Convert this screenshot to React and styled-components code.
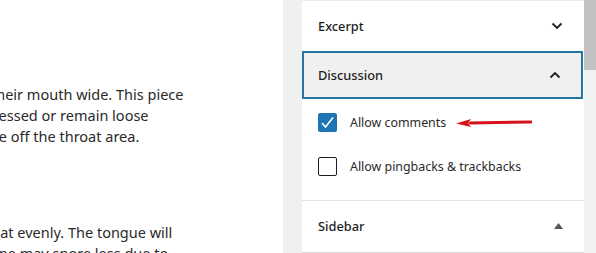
import React from "react";
import styled, { createGlobalStyle } from "styled-components";

const Global = createGlobalStyle`
  html, body { margin: 0; padding: 0; background: #fff; overflow: hidden; }
  body { font-family: "Noto Sans", "Open Sans", sans-serif; color: #1e1e1e; }
`;

const Page = styled.div`
  display: flex;
  width: 596px;
  height: 253px;
  overflow: hidden;
`;

const Content = styled.div`
  width: 283px;
  flex: none;
  background: #fff;
  overflow: hidden;
`;

const Paragraph = styled.div`
  margin-top: ${(p) => p.$top}px;
  font-size: 14.5px;
  line-height: 21px;
  color: #2a2a2a;
  white-space: nowrap;
`;

const Line = styled.div`
  margin-left: ${(p) => p.$shift}px;
`;

const Gutter = styled.div`
  width: 19px;
  flex: none;
  background: #f0f0f0;
`;

const Panel = styled.div`
  width: 282px;
  flex: none;
  height: 251px;
  background: #fff;
  border-top: 1px solid #eaeaea;
  border-bottom: 1px solid #d8d8d8;
  display: flex;
  flex-direction: column;
`;

const Header = styled.div`
  display: flex;
  align-items: center;
  justify-content: space-between;
  height: ${(p) => p.$h}px;
  font-size: 12.8px;
  font-weight: 500;
  color: #1e1e1e;
  box-sizing: border-box;
  background: ${(p) => (p.$active ? "#f0f0f0" : "#fff")};
  border: ${(p) => (p.$active ? "2px solid #2676a5" : "none")};
  margin-right: ${(p) => (p.$active ? "1px" : "0")};
  padding-left: ${(p) => (p.$active ? "14px" : "16px")};
  padding-right: ${(p) => (p.$active ? "20px" : "21px")};
`;

const Body = styled.div`
  display: flex;
  flex-direction: column;
  gap: 25px;
  padding: 14px 16px 24px 16px;
  border-bottom: 1px solid #e2e2e2;
`;

const Option = styled.label`
  display: flex;
  align-items: center;
  gap: 13px;
  font-size: 12.4px;
  color: #2a2a2a;
  height: 19px;
`;

const Box = styled.span`
  width: 19px;
  height: 19px;
  box-sizing: border-box;
  border-radius: 2px;
  flex: none;
  display: flex;
  align-items: center;
  justify-content: center;
  background: ${(p) => (p.$checked ? "#1f74b3" : "#fff")};
  border: ${(p) => (p.$checked ? "none" : "1.5px solid #1e1e1e")};
`;

const Arrow = styled.svg`
  margin-left: -3px;
  flex: none;
`;

const Scrollbar = styled.div`
  flex: 1;
  background: #f1f1f1;
  display: flex;
  flex-direction: column;
`;

const Thumb = styled.div`
  height: 70px;
  background: #c1c1c1;
`;

const Chevron = ({ up }) => (
  <svg width="12" height="8" viewBox="0 0 12 8">
    <path
      d={up ? "M1.5 6.5 L6 2 L10.5 6.5" : "M1.5 1.5 L6 6 L10.5 1.5"}
      fill="none"
      stroke="#1e1e1e"
      strokeWidth="1.8"
    />
  </svg>
);

export default function App() {
  return (
    <>
      <Global />
      <Page>
        <Content>
          <Paragraph $top={84}>
            <Line $shift={-9}>their mouth wide. This piece</Line>
            <Line $shift={-16}>pressed or remain loose</Line>
            <Line $shift={-17}>ove off the throat area.</Line>
          </Paragraph>
          <Paragraph $top={75}>
            <Line $shift={-8}>eat evenly. The tongue will</Line>
            <Line $shift={-10}>one may snore less due to</Line>
          </Paragraph>
        </Content>
        <Gutter />
        <Panel>
          <Header $h={50}>
            Excerpt
            <Chevron />
          </Header>
          <Header $h={48} $active>
            Discussion
            <Chevron up />
          </Header>
          <Body>
            <Option>
              <Box $checked>
                <svg width="15" height="13" viewBox="0 0 15 13">
                  <path d="M2 7 L5.5 11 L13 1.5" fill="none" stroke="#fff" strokeWidth="1.6" />
                </svg>
              </Box>
              Allow comments
              <Arrow width="76" height="10" viewBox="0 0 76 10">
                <path d="M14 5 L75 4" stroke="#d7141a" strokeWidth="3" strokeLinecap="round" />
                <path d="M0 5.5 L15 1 L12 5 L15 9 Z" fill="#d7141a" />
              </Arrow>
            </Option>
            <Option>
              <Box />
              Allow pingbacks &amp; trackbacks
            </Option>
          </Body>
          <Header $h={50}>
            Sidebar
            <svg width="9" height="6" viewBox="0 0 9 6">
              <path d="M0 6 L4.5 0 L9 6 Z" fill="#555" />
            </svg>
          </Header>
        </Panel>
        <Scrollbar>
          <Thumb />
        </Scrollbar>
      </Page>
    </>
  );
}
